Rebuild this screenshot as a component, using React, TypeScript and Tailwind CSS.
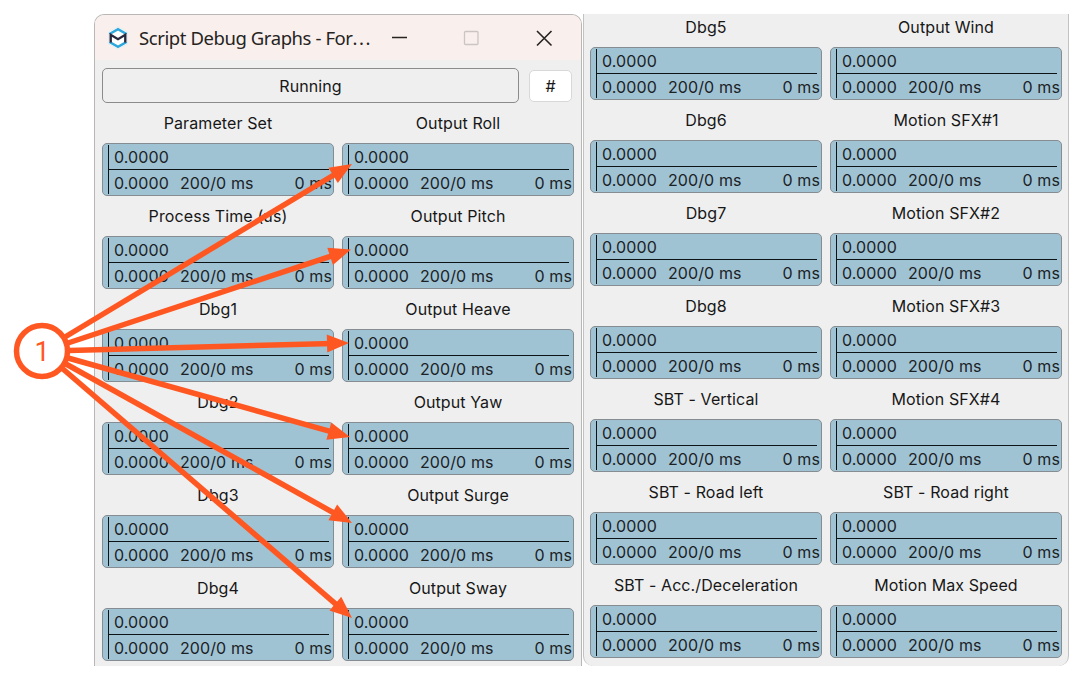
const leftGraphs = [
  'Parameter Set',
  'Output Roll',
  'Process Time (us)',
  'Output Pitch',
  'Dbg1',
  'Output Heave',
  'Dbg2',
  'Output Yaw',
  'Dbg3',
  'Output Surge',
  'Dbg4',
  'Output Sway',
]

const rightGraphs = [
  'Dbg5',
  'Output Wind',
  'Dbg6',
  'Motion SFX#1',
  'Dbg7',
  'Motion SFX#2',
  'Dbg8',
  'Motion SFX#3',
  'SBT - Vertical',
  'Motion SFX#4',
  'SBT - Road left',
  'SBT - Road right',
  'SBT - Acc./Deceleration',
  'Motion Max Speed',
]

// Start point near the callout, then the arrow tip
const arrows = [
  { x1: 65, y1: 337, x2: 352, y2: 164 },
  { x1: 68, y1: 343, x2: 351, y2: 249.5 },
  { x1: 69, y1: 350.5, x2: 349, y2: 343 },
  { x1: 68, y1: 358, x2: 350, y2: 437 },
  { x1: 66, y1: 364, x2: 352, y2: 523 },
  { x1: 63, y1: 369, x2: 352, y2: 618 },
]

function Graph({ label }: { label: string }) {
  return (
    <div>
      <div className="flex h-10 items-center justify-center text-[16px] tracking-[0.1px] whitespace-nowrap">
        {label}
      </div>
      <div className="flex h-[53px] rounded-[5px] border-[1.5px] border-[#868d92] bg-[#a0c3d3] py-px pl-[5px] tracking-[0.1px] text-[#1b2226]">
        <div className="flex flex-1 flex-col border-l-[1.5px] border-[#0d1214]">
          <div className="mr-1 flex h-[25px] items-center border-b-[1.5px] border-[#0d1214] pt-px pl-[5px]">
            0.0000
          </div>
          <div className="flex h-[25px] items-center pt-[2px] pl-[5px]">
            <span className="w-[66px]">0.0000</span>
            <span>200/0 ms</span>
            <span className="ml-auto pr-px">0 ms</span>
          </div>
        </div>
      </div>
    </div>
  )
}

function GraphGrid({ labels }: { labels: string[] }) {
  return (
    <div className="grid grid-cols-[232px_232px] gap-x-2">
      {labels.map((label) => (
        <Graph key={label} label={label} />
      ))}
    </div>
  )
}

function TitleBar() {
  return (
    <header className="flex h-[45px] items-center bg-[#f9f0ed] pl-[12px]">
      <svg width="22" height="24" viewBox="0 0 22 24" fill="none">
        <path
          d="M11 .8 20.500 6v12L11 23.200 1.500 18V6z"
          fill="#fff"
          stroke="#e8ebee"
        />
        <path
          d="M3.500 8V7.400L11 3.200l7.500 4.200V8M3.500 16v.6l7.500 4.200 7.500-4.200V16"
          stroke="#2ea7dc"
          strokeWidth="2.500"
        />
        <path
          d="M3.700 16.500V8.800L11 13.200l7.300-4.400v7.700"
          stroke="#29283d"
          strokeWidth="2.400"
        />
      </svg>
      <h1 className="ml-[10px] w-[234px] font-['Noto_Sans'] text-[18.5px] tracking-[-0.42px] whitespace-nowrap text-[#262322]">
        Script Debug Graphs - For<span className="tracking-[1.5px]">...</span>
      </h1>
      <svg
        className="ml-[18px]"
        width="164"
        height="18"
        viewBox="0 0 164 18"
        fill="none"
      >
        <path d="M1 8.500h15" stroke="#262322" strokeWidth="1.500" />
        <rect x="73.500" y="2.500" width="13.500" height="13" rx="1" stroke="#cbc4c2" strokeWidth="1.300" />
        <path d="m146 2 14.500 14.500M160.500 2 146 16.500" stroke="#262322" strokeWidth="1.600" />
      </svg>
    </header>
  )
}

function Annotations() {
  return (
    <svg
      className="absolute inset-0"
      width="1084"
      height="680"
      viewBox="0 0 1084 680"
      fill="none"
    >
      {arrows.map(({ x1, y1, x2, y2 }) => {
        const length = Math.hypot(x2 - x1, y2 - y1)
        const angle = (Math.atan2(y2 - y1, x2 - x1) * 180) / Math.PI
        return (
          <g key={y2} transform={`translate(${x1} ${y1}) rotate(${angle})`}>
            <path d={`M0 0H${length - 16}`} stroke="#ff5722" strokeWidth="5.500" />
            <path
              d={`M${length} 0l-22-9v18z`}
              fill="#ff5722"
            />
          </g>
        )
      })}
      <circle cx="42" cy="351" r="25.500" fill="#fff" stroke="#ff5722" strokeWidth="5.500" />
      <text
        x="42"
        y="361"
        textAnchor="middle"
        fill="#ff5722"
        className="font-['Roboto'] text-[27px] font-normal"
      >
        1
      </text>
    </svg>
  )
}

export default function App() {
  return (
    <main className="relative flex h-[680px] w-[1084px] items-start overflow-hidden bg-white pt-[14px] pl-[94px] font-['Inter',sans-serif] text-[16px] leading-5 text-[#171717]">
      <section className="h-[652px] w-[488px] overflow-hidden rounded-t-[10px] border border-b-0 border-[#b9b7b6] bg-[#efefef]">
        <TitleBar />
        <div className="flex h-[43px] items-center gap-[10px] pt-[8px] pl-[7px]">
          <div className="flex h-[35px] w-[417px] items-center justify-center rounded-[5px] border-[1.5px] border-[#8b8b8b] pt-px tracking-[0.1px]">
            Running
          </div>
          <button className="flex h-[32px] w-[43px] items-center justify-center rounded-[5px] border border-[#d8d8d8] bg-white">
            #
          </button>
        </div>
        <div className="pl-[7px]">
          <GraphGrid labels={leftGraphs} />
        </div>
      </section>
      <section className="h-[652px] w-[486px] ml-px overflow-hidden rounded-b-[10px] border-x border-[#c2c2c2] bg-[#efefef] pl-[6px]">
        <div className="-mt-[7px]">
          <GraphGrid labels={rightGraphs} />
        </div>
      </section>
      <Annotations />
    </main>
  )
}
